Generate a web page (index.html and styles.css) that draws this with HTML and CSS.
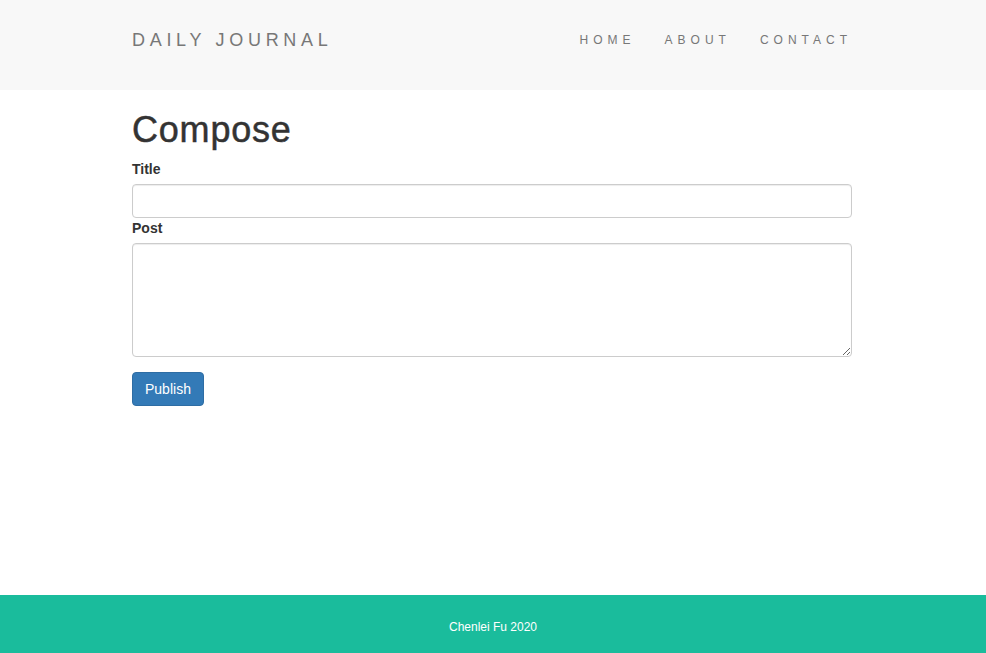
FILE: index.html
```html
<!DOCTYPE html>
<html lang="en">
<head>
<meta charset="utf-8">
<title>Daily Journal</title>
<link rel="stylesheet" href="styles.css">
</head>
<body>
<nav class="navbar">
  <div class="container navbar-inner">
    <a class="brand" href="#">DAILY JOURNAL</a>
    <ul class="nav">
      <li><a href="#">HOME</a></li>
      <li><a href="#">ABOUT</a></li>
      <li><a href="#">CONTACT</a></li>
    </ul>
  </div>
</nav>
<main class="container main">
  <h1 class="title">Compose</h1>
  <form class="form">
    <label class="label" for="t">Title</label>
    <input class="control" id="t" type="text">
    <label class="label" for="p">Post</label>
    <textarea class="control area" id="p" rows="5"></textarea>
    <button class="btn" type="button">Publish</button>
  </form>
</main>
<footer class="footer">
  <p class="footer-text">Chenlei Fu 2020</p>
</footer>
</body>
</html>
```
FILE: styles.css
```css
* { box-sizing: border-box; }
html, body { height: 100%; }
body {
  margin: 0;
  font-family: "Liberation Sans", Arial, sans-serif;
  font-size: 14px;
  line-height: 20px;
  color: #333;
  background: #fff;
  display: flex;
  flex-direction: column;
  min-height: 100vh;
}
.container {
  width: 750px;
  margin: 0 auto;
  padding: 0 15px;
  transform: translateX(-1px);
}
.navbar {
  background: #f8f8f8;
  height: 90px;
  flex: none;
}
.navbar-inner {
  height: 90px;
  display: flex;
  align-items: center;
  justify-content: space-between;
  padding-bottom: 10px;
}
.brand {
  font-size: 18px;
  letter-spacing: 4.7px;
  color: #777;
  text-decoration: none;
}
.nav {
  list-style: none;
  margin: 0 -14px 0 0;
  padding: 0;
  display: flex;
}
.nav a {
  display: block;
  padding: 0 14px 0 15px;
  font-size: 12px;
  letter-spacing: 5px;
  color: #777;
  text-decoration: none;
}
.main { flex: 1 0 auto; }
.title {
  font-size: 36px;
  font-weight: 500;
  line-height: 40px;
  letter-spacing: 0.8px;
  -webkit-text-stroke: 0.5px #333;
  margin: 20px 0 9px;
  color: #333;
}
.form { display: flex; flex-direction: column; align-items: flex-start; }
.label {
  font-weight: bold;
  margin-bottom: 5px;
}
.control {
  width: 100%;
  height: 34px;
  padding: 6px 12px;
  font: inherit;
  color: #555;
  background: #fff;
  border: 1px solid #ccc;
  border-radius: 4px;
  box-shadow: inset 0 1px 1px rgba(0,0,0,.075);
  margin: 0;
}
.area {
  height: 114px;
  resize: vertical;
}
.btn {
  margin-top: 15px;
  height: 34px;
  padding: 6px 12px;
  font: inherit;
  color: #fff;
  background: #337ab7;
  border: 1px solid #2e6da4;
  border-radius: 4px;
}
.footer {
  flex: none;
  height: 58px;
  background: #1abc9c;
  text-align: center;
}
.footer-text {
  margin: 0;
  padding-top: 25px;
  font-size: 12px;
  line-height: 14px;
  color: #fff;
}
```
